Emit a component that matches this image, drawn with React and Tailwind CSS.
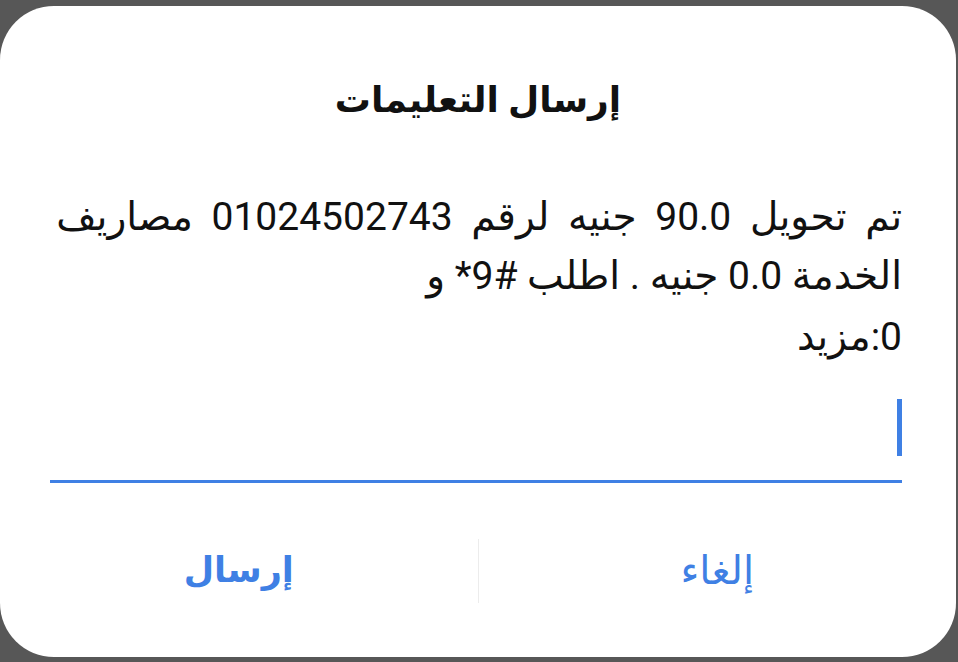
export default function App() {
  return (
    <div className="w-[958px] h-[662px] bg-[#575757] pt-[6px] pb-[5px] pr-[2px] overflow-hidden" style={{ fontFamily: "Roboto, 'DejaVu Sans', sans-serif" }}>
      <div dir="rtl" className="h-full bg-white rounded-[54px] flex flex-col">
        <h1 className="mt-[72px] text-center text-[36px] leading-[44px] font-bold text-[#111]">إرسال التعليمات</h1>

        <div className="mt-[66px] pr-[54px] pl-[50px] text-[39px] leading-[59px] text-[#111]">
          <p className="whitespace-nowrap [word-spacing:9px]">تم تحويل 90.0 جنيه لرقم 01024502743 مصاريف</p>
          <p>الخدمة 0.0 جنيه . اطلب #9* و</p>
          <p className="mt-[2px]">0:مزيد</p>
        </div>

        <div className="ml-[50px] mr-[54px] mt-[32px] h-[84px] border-b-[3px] border-[#3f80e4] flex items-start">
          <div className="w-[5px] h-[57px] bg-[#3f80e4]" />
        </div>

        <div className="mt-[56px] flex h-[64px] items-center">
          <button className="flex-1 text-[40px] font-normal text-[#3f80e4]">إلغاء</button>
          <div className="w-px h-full bg-[#ececec]" />
          <button className="flex-1 text-[35px] font-bold text-[#3f80e4]">إرسال</button>
        </div>
      </div>
    </div>
  );
}
